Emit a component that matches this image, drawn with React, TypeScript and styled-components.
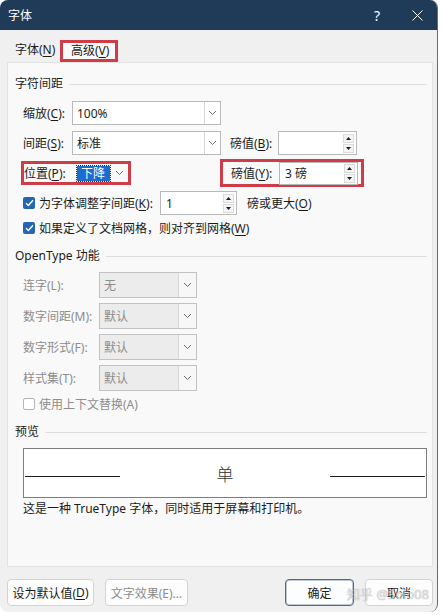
import React from "react";
import styled, { createGlobalStyle, css } from "styled-components";

const GlobalStyle = createGlobalStyle`
  html, body {
    margin: 0;
    padding: 0;
    background: #ffffff;
  }
  body {
    font-family: "Noto Sans", "Noto Sans CJK SC", sans-serif;
    font-size: 12px;
    color: #1b1b1b;
  }
`;

// Dialog frame
const Window = styled.div`
  width: 438px;
  height: 612px;
  box-sizing: border-box;
  border-radius: 8px;
  overflow: hidden;
  background: #f0f0f0;
  border-right: 1px solid #6b6b6b;
  display: flex;
  flex-direction: column;
  position: relative;
`;

const TitleBar = styled.div`
  height: 30px;
  flex-shrink: 0;
  background: #1f3b58;
  color: #ffffff;
  display: flex;
  align-items: center;
  padding-left: 8px;
`;

const Title = styled.span`
  flex: 1;
  font-size: 12px;
`;

const CaptionButton = styled.div`
  width: 40px;
  height: 30px;
  display: flex;
  align-items: center;
  justify-content: center;
  font-size: 14px;
  color: #ffffff;
`;

// Tabs
const TabStrip = styled.div`
  height: 32px;
  flex-shrink: 0;
  display: flex;
  align-items: flex-end;
  padding-left: 7px;
`;

const Tab = styled.div<{ $active?: boolean; $width: number }>`
  width: ${(p) => p.$width}px;
  height: 22px;
  box-sizing: border-box;
  line-height: 20px;
  padding-left: 8px;
  white-space: nowrap;
  ${(p) =>
    p.$active &&
    css`
      border: 3px solid #cf3b46;
      background: #f9f9f9;
      padding-left: 8px;
      line-height: 16px;
    `}
`;

const Key = styled.u`
  text-underline-offset: 2px;
  text-decoration-thickness: 1px;
`;

const Panel = styled.div`
  width: 426px;
  height: 505px;
  margin-left: 7px;
  box-sizing: border-box;
  background: #f9f9f9;
  border: 1px solid #e3e3e3;
  padding: 13px 5px 0 7px;
  display: flex;
  flex-direction: column;
`;

const GroupHeader = styled.div<{ $gap?: number }>`
  height: 16px;
  line-height: 16px;
  margin-top: ${(p) => p.$gap ?? 0}px;
  display: flex;
  align-items: center;
  gap: 6px;
  white-space: nowrap;

  &::after {
    content: "";
    flex: 1;
    height: 1px;
    background: #dedede;
  }
`;

const Group = styled.div<{ $top: number; $gap: number }>`
  margin-top: ${(p) => p.$top}px;
  padding-left: 8px;
  display: flex;
  flex-direction: column;
  gap: ${(p) => p.$gap}px;
`;

const Row = styled.div<{ $height: number }>`
  height: ${(p) => p.$height}px;
  display: flex;
  align-items: center;
  white-space: nowrap;
`;

const Label = styled.span<{ $width?: number; $muted?: boolean; $indent?: number }>`
  ${(p) => p.$width !== undefined && `width: ${p.$width}px; flex-shrink: 0;`}
  margin-left: ${(p) => p.$indent ?? 0}px;
  color: ${(p) => (p.$muted ? "#8d8d8d" : "#1b1b1b")};
`;

// Drop-down list
const Combo = styled.div<{ $width: number; $height: number; $muted?: boolean; $bare?: boolean }>`
  width: ${(p) => p.$width}px;
  height: ${(p) => p.$height}px;
  flex-shrink: 0;
  box-sizing: border-box;
  display: flex;
  border: 1px solid ${(p) => (p.$bare ? "transparent" : p.$muted ? "#c2c2c2" : "#b9b9b9")};
  background: ${(p) => (p.$bare ? "transparent" : p.$muted ? "#ececec" : "#ffffff")};
  color: ${(p) => (p.$muted ? "#8d8d8d" : "#1b1b1b")};
`;

const ComboText = styled.div`
  flex: 1;
  display: flex;
  align-items: center;
  padding-left: 4px;
`;

const ComboArrow = styled.div<{ $width: number; $muted?: boolean; $bare?: boolean }>`
  width: ${(p) => p.$width}px;
  flex-shrink: 0;
  display: flex;
  align-items: center;
  justify-content: center;
  border-left: 1px solid ${(p) => (p.$bare ? "transparent" : "#d6d6d6")};
  background: ${(p) => (p.$muted ? "#f7f7f7" : "transparent")};
`;

const Selected = styled.span`
  background: #1a6dd0;
  color: #ffffff;
  padding: 0 5px 0 4px;
  line-height: 15px;
  outline: 1px dotted #0d2f5a;
`;

const Chevron = () => (
  <svg width="9" height="6" viewBox="0 0 9 6">
    <path d="M1 1 L4.5 4.5 L8 1" fill="none" stroke="#6a6a6a" strokeWidth="1" />
  </svg>
);

// Numeric up/down field
const Spin = styled.div<{ $width: number; $height: number }>`
  width: ${(p) => p.$width}px;
  height: ${(p) => p.$height}px;
  flex-shrink: 0;
  box-sizing: border-box;
  border: 1px solid #b9b9b9;
  background: #ffffff;
  display: flex;
  align-items: center;
  padding: 0 2px 0 5px;
`;

const SpinValue = styled.span`
  flex: 1;
`;

const SpinButtons = styled.div`
  display: flex;
  flex-direction: column;
  gap: 1px;
`;

const SpinButton = styled.div`
  width: 11px;
  height: 9px;
  box-sizing: border-box;
  border: 1px solid #dadada;
  background: #f4f4f4;
  display: flex;
  align-items: center;
  justify-content: center;
`;

const Triangle = ({ up }: { up?: boolean }) => (
  <svg width="5" height="3" viewBox="0 0 5 3">
    <path d={up ? "M0 3 L2.5 0 L5 3 Z" : "M0 0 L2.5 3 L5 0 Z"} fill="#1b1b1b" />
  </svg>
);

const SpinBox = ({ value, width, height }: { value: string; width: number; height: number }) => (
  <Spin $width={width} $height={height}>
    <SpinValue>{value}</SpinValue>
    <SpinButtons>
      <SpinButton>
        <Triangle up />
      </SpinButton>
      <SpinButton>
        <Triangle />
      </SpinButton>
    </SpinButtons>
  </Spin>
);

// Red outline marking a control
const Highlight = styled.div<{ $height: number; $offset: number; $padLeft: number; $padRight: number }>`
  height: ${(p) => p.$height}px;
  box-sizing: border-box;
  flex-shrink: 0;
  display: flex;
  align-items: center;
  border: 3px solid #cf3b46;
  margin-left: ${(p) => p.$offset}px;
  padding: 0 ${(p) => p.$padRight}px 0 ${(p) => p.$padLeft}px;
`;

const Check = styled.span<{ $checked?: boolean }>`
  width: 12px;
  height: 12px;
  box-sizing: border-box;
  flex-shrink: 0;
  border-radius: 2px;
  margin-right: 4px;
  display: flex;
  align-items: center;
  justify-content: center;
  ${(p) =>
    p.$checked
      ? css`
          background: #2466b2;
        `
      : css`
          background: #ffffff;
          border: 1px solid #b5b5b5;
        `}
`;

const CheckMark = () => (
  <svg width="9" height="8" viewBox="0 0 9 8">
    <path d="M1 4.2 L3.4 6.4 L8 1.3" fill="none" stroke="#ffffff" strokeWidth="1.4" />
  </svg>
);

// Preview area
const Preview = styled.div`
  margin-top: 8px;
  width: 404px;
  height: 50px;
  box-sizing: border-box;
  background: #ffffff;
  border: 1px solid #7d7d7d;
  display: flex;
  align-items: center;
  padding: 0 1px;
`;

const PreviewRule = styled.div`
  width: 95px;
  height: 1px;
  background: #1b1b1b;
  margin-top: 6px;
`;

const PreviewGlyph = styled.div`
  flex: 1;
  text-align: center;
  font-family: "Noto Sans CJK SC", serif;
  font-weight: 300;
  font-size: 17px;
  color: #333333;
`;

const Note = styled.div`
  margin-top: 3px;
  line-height: 16px;
`;

// Footer buttons
const ButtonBar = styled.div`
  display: flex;
  gap: 11px;
  padding: 12px 4px 0 7px;
`;

const Button = styled.div<{ $width: number; $primary?: boolean; $muted?: boolean; $push?: boolean }>`
  width: ${(p) => p.$width}px;
  height: 27px;
  box-sizing: border-box;
  border-radius: 4px;
  border: 1px solid #d3d3d3;
  background: #fdfdfd;
  display: flex;
  align-items: center;
  justify-content: center;
  color: ${(p) => (p.$muted ? "#8d8d8d" : "#1b1b1b")};
  ${(p) => p.$push && "margin-left: auto;"}
  ${(p) =>
    p.$primary &&
    css`
      border: 1px solid #4a6b8a;
      box-shadow: inset 0 0 0 1px rgba(74, 107, 138, 0.35);
      background: #fbfdff;
    `}
`;

const Watermark = styled.div`
  position: absolute;
  left: 347px;
  top: 584px;
  font-size: 13px;
  color: rgba(255, 255, 255, 0.55);
  text-shadow: 0 0 1px rgba(90, 90, 90, 0.6);
  pointer-events: none;
`;

const CloseIcon = () => (
  <svg width="11" height="11" viewBox="0 0 11 11">
    <path d="M0.5 0.5 L10.5 10.5 M10.5 0.5 L0.5 10.5" stroke="#ffffff" strokeWidth="1" />
  </svg>
);

const openTypeRows = [
  { label: "连字(L):", value: "无" },
  { label: "数字间距(M):", value: "默认" },
  { label: "数字形式(F):", value: "默认" },
  { label: "样式集(T):", value: "默认" },
];

export default function App() {
  return (
    <>
      <GlobalStyle />
      <Window>
        <TitleBar>
          <Title>字体</Title>
          <CaptionButton>?</CaptionButton>
          <CaptionButton>
            <CloseIcon />
          </CaptionButton>
        </TitleBar>

        <TabStrip>
          <Tab $width={53}>
            字体(<Key>N</Key>)
          </Tab>
          <Tab $width={58} $active>
            高级(<Key>V</Key>)
          </Tab>
        </TabStrip>

        <Panel>
          {/* Character spacing */}
          <GroupHeader>字符间距</GroupHeader>
          <Group $top={9} $gap={6}>
            <Row $height={24}>
              <Label $width={49}>
                缩放(<Key>C</Key>):
              </Label>
              <Combo $width={149} $height={24}>
                <ComboText>100%</ComboText>
                <ComboArrow $width={15}>
                  <Chevron />
                </ComboArrow>
              </Combo>
            </Row>
            <Row $height={24}>
              <Label $width={49}>
                间距(<Key>S</Key>):
              </Label>
              <Combo $width={149} $height={24}>
                <ComboText>标准</ComboText>
                <ComboArrow $width={15}>
                  <Chevron />
                </ComboArrow>
              </Combo>
              <Label $width={48} $indent={9}>
                磅值(<Key>B</Key>):
              </Label>
              <SpinBox value="" width={79} height={24} />
            </Row>
            <Row $height={24}>
              <Highlight $height={24} $offset={-2} $padLeft={0} $padRight={0}>
                <Label $width={48}>
                  位置(<Key>P</Key>):
                </Label>
                <Combo $width={56} $height={18} $bare>
                  <ComboText>
                    <Selected>下降</Selected>
                  </ComboText>
                  <ComboArrow $width={16} $bare>
                    <Chevron />
                  </ComboArrow>
                </Combo>
              </Highlight>
              <Highlight $height={28} $offset={89} $padLeft={8} $padRight={3}>
                <Label $width={48}>
                  磅值(<Key>Y</Key>):
                </Label>
                <SpinBox value="3 磅" width={79} height={23} />
              </Highlight>
            </Row>
            <Row $height={24}>
              <Check $checked>
                <CheckMark />
              </Check>
              <Label $width={121}>
                为字体调整字间距(<Key>K</Key>):
              </Label>
              <SpinBox value="1" width={77} height={24} />
              <Label $indent={10}>
                磅或更大(<Key>O</Key>)
              </Label>
            </Row>
            <Row $height={14}>
              <Check $checked>
                <CheckMark />
              </Check>
              <Label>
                如果定义了文档网格，则对齐到网格(<Key>W</Key>)
              </Label>
            </Row>
          </Group>

          {/* OpenType features, all disabled */}
          <GroupHeader $gap={13}>OpenType 功能</GroupHeader>
          <Group $top={8} $gap={5}>
            {openTypeRows.map((r) => (
              <Row $height={26} key={r.label}>
                <Label $width={76} $muted>
                  {r.label}
                </Label>
                <Combo $width={98} $height={26} $muted>
                  <ComboText>{r.value}</ComboText>
                  <ComboArrow $width={17} $muted>
                    <Chevron />
                  </ComboArrow>
                </Combo>
              </Row>
            ))}
          </Group>
          <Group $top={6} $gap={0}>
            <Row $height={14}>
              <Check />
              <Label $muted>使用上下文替换(A)</Label>
            </Row>
          </Group>

          {/* Preview */}
          <GroupHeader $gap={13}>预览</GroupHeader>
          <Group $top={0} $gap={0}>
            <Preview>
              <PreviewRule />
              <PreviewGlyph>单</PreviewGlyph>
              <PreviewRule />
            </Preview>
            <Note>这是一种 TrueType 字体，同时适用于屏幕和打印机。</Note>
          </Group>
        </Panel>

        <ButtonBar>
          <Button $width={87}>
            设为默认值(<Key>D</Key>)
          </Button>
          <Button $width={83} $muted>
            文字效果(E)...
          </Button>
          <Button $width={69} $primary $push>
            确定
          </Button>
          <Button $width={68}>取消</Button>
        </ButtonBar>

        <Watermark>知乎 @Solo08</Watermark>
      </Window>
    </>
  );
}
